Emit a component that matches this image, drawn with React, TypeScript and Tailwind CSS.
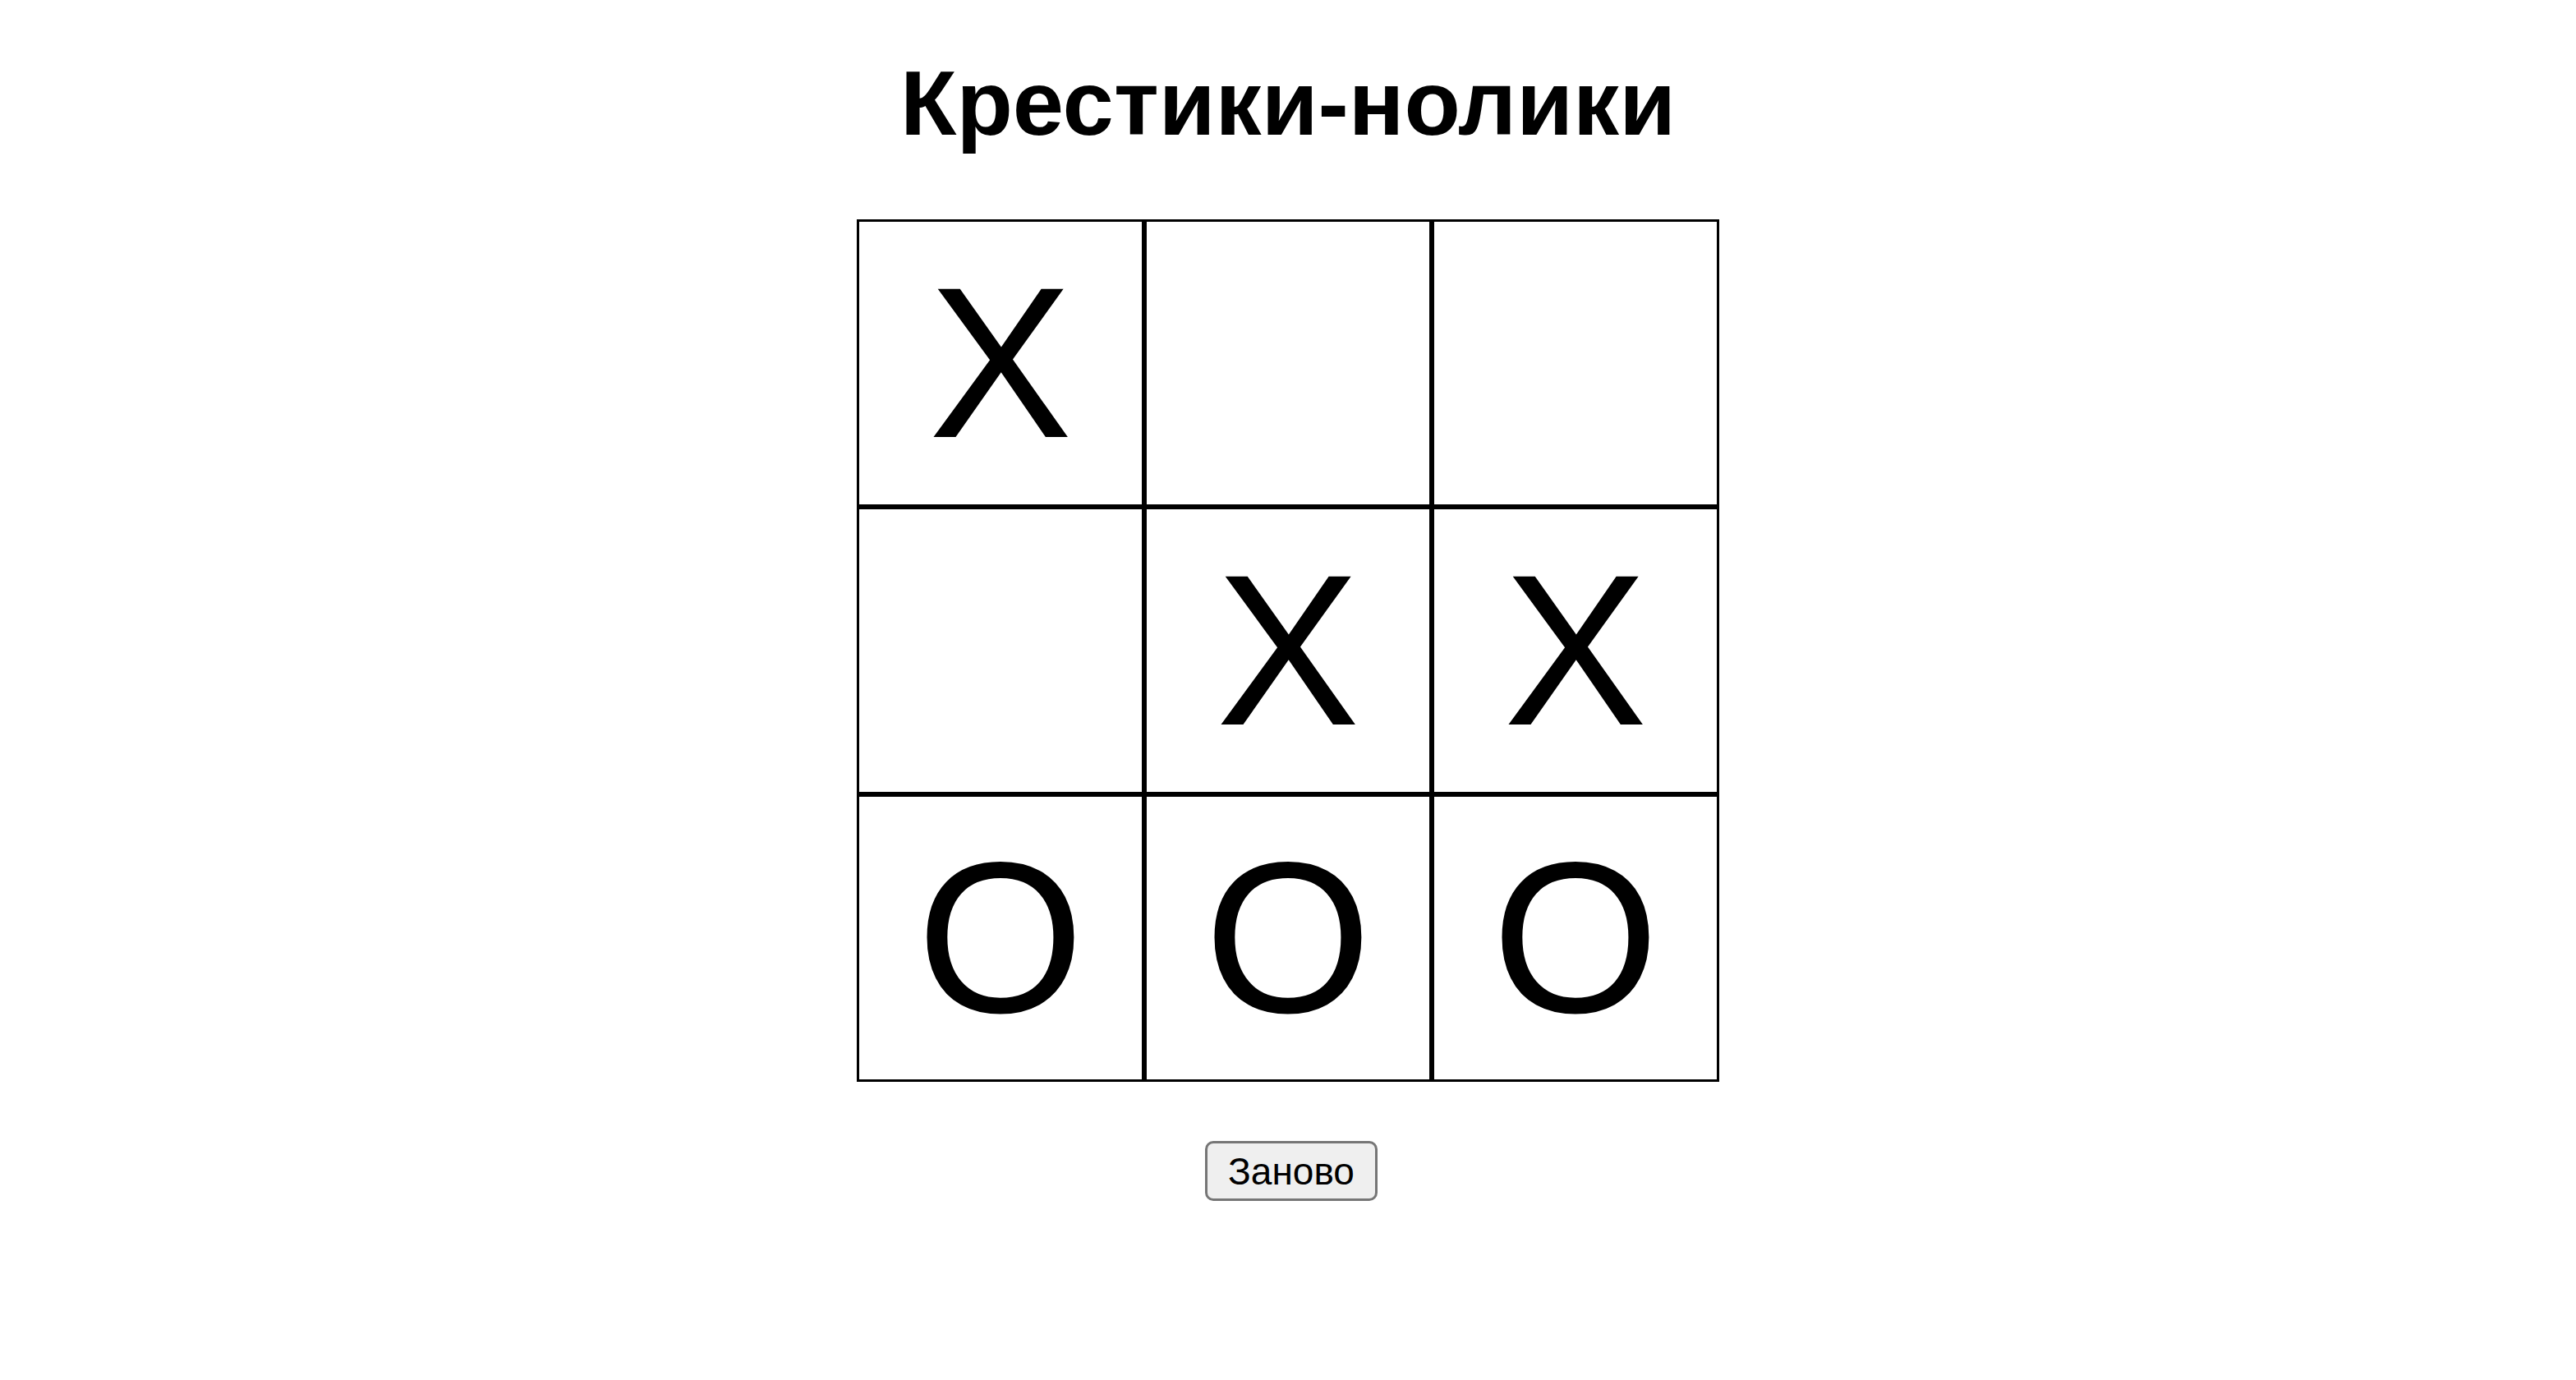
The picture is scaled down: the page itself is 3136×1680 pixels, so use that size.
import { useState } from "react";

type Mark = "X" | "O" | null;

const initial: Mark[] = ["X", null, null, null, "X", "X", "O", "O", "O"];

export default function App() {
  const [cells, setCells] = useState<Mark[]>(initial);

  return (
    <div className="min-h-[1680px] bg-white text-black font-['Liberation_Sans',Arial,sans-serif] flex flex-col items-center">
      <h1 className="mt-[61px] mb-[77px] text-[112px] leading-[129px] font-bold">Крестики-нолики</h1>

      <div className="grid grid-cols-[repeat(3,350px)] grid-rows-[repeat(3,350px)]">
        {cells.map((cell, i) => (
          <div
            key={i}
            className="border-[3px] border-black flex items-center justify-center text-[262px] leading-none"
          >
            {cell}
          </div>
        ))}
      </div>

      <button
        onClick={() => setCells(Array(9).fill(null))}
        className="mt-[72px] ml-[8px] w-[210px] h-[73px] border-[3px] border-[#767676] rounded-[10px] bg-[#efefef] text-[46px] leading-none text-black"
      >
        Заново
      </button>
    </div>
  );
}
